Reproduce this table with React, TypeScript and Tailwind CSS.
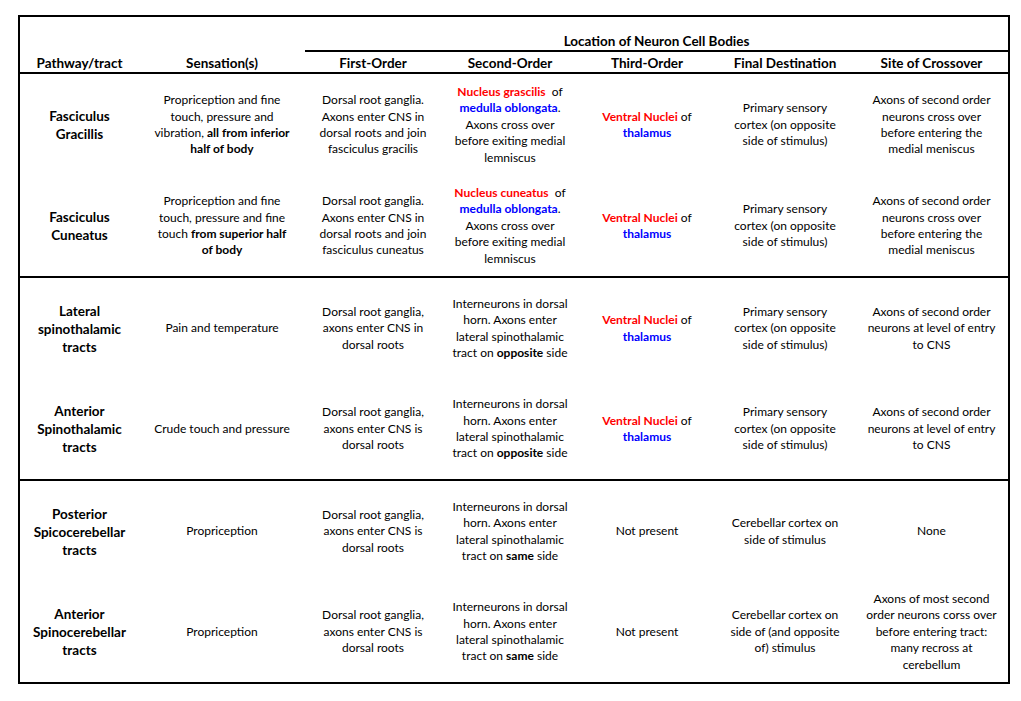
import React from "react";

const R = ({ children }: { children: React.ReactNode }) => (
  <span className="font-bold text-[#ff0000]">{children}</span>
);
const B = ({ children }: { children: React.ReactNode }) => (
  <span className="font-bold text-[#0000ff]">{children}</span>
);

const cols = "grid grid-cols-[119px_166px_136px_138px_136px_140px_153px]";

const Cell = ({ children, bold }: { children: React.ReactNode; bold?: boolean }) => (
  <div
    className={
      bold
        ? "flex items-center justify-center text-center whitespace-nowrap text-[13.5px] leading-[18px] font-bold"
        : "flex items-center justify-center text-center whitespace-nowrap text-[12px] leading-[16.4px]"
    }
  >
    <div>{children}</div>
  </div>
);

const thalamus = (
  <>
    <R>Ventral Nuclei</R> of
    <br />
    <B>thalamus</B>
  </>
);

const sensory = (
  <>
    Primary sensory
    <br />
    cortex (on opposite
    <br />
    side of stimulus)
  </>
);

const rows: React.ReactNode[][] = [
  [
    <>Fasciculus<br />Gracillis</>,
    <>
      Propriception and fine<br />touch, pressure and<br />vibration, <b>all from inferior<br />half of body</b>
    </>,
    <>Dorsal root ganglia.<br />Axons enter CNS in<br />dorsal roots and join<br />fasciculus gracilis</>,
    <>
      <R>Nucleus grascilis</R>&nbsp; of<br /><B>medulla oblongata</B>.<br />Axons cross over<br />before exiting medial<br />lemniscus
    </>,
    thalamus,
    sensory,
    <>Axons of second order<br />neurons cross over<br />before entering the<br />medial meniscus</>,
  ],
  [
    <>Fasciculus<br />Cuneatus</>,
    <>
      Propriception and fine<br />touch, pressure and fine<br />touch <b>from superior half<br />of body</b>
    </>,
    <>Dorsal root ganglia.<br />Axons enter CNS in<br />dorsal roots and join<br />fasciculus cuneatus</>,
    <>
      <R>Nucleus cuneatus</R>&nbsp; of<br /><B>medulla oblongata</B>.<br />Axons cross over<br />before exiting medial<br />lemniscus
    </>,
    thalamus,
    sensory,
    <>Axons of second order<br />neurons cross over<br />before entering the<br />medial meniscus</>,
  ],
  [
    <>Lateral<br />spinothalamic<br />tracts</>,
    <>Pain and temperature</>,
    <>Dorsal root ganglia,<br />axons enter CNS in<br />dorsal roots</>,
    <>Interneurons in dorsal<br />horn. Axons enter<br />lateral spinothalamic<br />tract on <b>opposite</b> side</>,
    thalamus,
    sensory,
    <>Axons of second order<br />neurons at level of entry<br />to CNS</>,
  ],
  [
    <>Anterior<br />Spinothalamic<br />tracts</>,
    <>Crude touch and pressure</>,
    <>Dorsal root ganglia,<br />axons enter CNS is<br />dorsal roots</>,
    <>Interneurons in dorsal<br />horn. Axons enter<br />lateral spinothalamic<br />tract on <b>opposite</b> side</>,
    thalamus,
    sensory,
    <>Axons of second order<br />neurons at level of entry<br />to CNS</>,
  ],
  [
    <>Posterior<br />Spicocerebellar<br />tracts</>,
    <>Propriception</>,
    <>Dorsal root ganglia,<br />axons enter CNS is<br />dorsal roots</>,
    <>Interneurons in dorsal<br />horn. Axons enter<br />lateral spinothalamic<br />tract on <b>same</b> side</>,
    <>Not present</>,
    <>Cerebellar cortex on<br />side of stimulus</>,
    <>None</>,
  ],
  [
    <>Anterior<br />Spinocerebellar<br />tracts</>,
    <>Propriception</>,
    <>Dorsal root ganglia,<br />axons enter CNS is<br />dorsal roots</>,
    <>Interneurons in dorsal<br />horn. Axons enter<br />lateral spinothalamic<br />tract on <b>same</b> side</>,
    <>Not present</>,
    <>Cerebellar cortex on<br />side of (and opposite<br />of) stimulus</>,
    <>Axons of most second<br />order neurons corss over<br />before entering tract:<br />many recross at<br />cerebellum</>,
  ],
];

const Row = ({ cells, h }: { cells: React.ReactNode[]; h: string }) => (
  <div className={`${cols} ${h}`}>
    {cells.map((c, i) => (
      <Cell key={i} bold={i === 0}>
        {c}
      </Cell>
    ))}
  </div>
);

export default function App() {
  return (
    <div className="min-h-[701px] bg-white text-black pl-[18px] pt-[15px] font-['Lato',sans-serif]">
      <div className="w-[992px] h-[669px] border-2 border-black flex flex-col">
        {/* header */}
        <div className={`${cols} h-[35px]`}>
          <div className="col-span-2" />
          <div className="col-span-5 flex items-end justify-center border-b-2 border-black text-[13.5px] leading-[17px] font-bold">
            Location of Neuron Cell Bodies
          </div>
        </div>
        <div className={`${cols} h-[22px] border-b-2 border-black`}>
          {["Pathway/tract", "Sensation(s)", "First-Order", "Second-Order", "Third-Order", "Final Destination", "Site of Crossover"].map((t) => (
            <div key={t} className="flex items-end justify-center text-[13.5px] leading-[17px] font-bold whitespace-nowrap">
              {t}
            </div>
          ))}
        </div>

        <div className="h-[204px] border-b-2 border-black flex flex-col">
          <Row cells={rows[0]} h="h-[102px]" />
          <Row cells={rows[1]} h="flex-1" />
        </div>
        <div className="h-[203px] border-b-2 border-black flex flex-col">
          <Row cells={rows[2]} h="h-[101px]" />
          <Row cells={rows[3]} h="flex-1" />
        </div>
        <div className="flex-1 flex flex-col">
          <Row cells={rows[4]} h="h-[101px]" />
          <Row cells={rows[5]} h="flex-1" />
        </div>
      </div>
    </div>
  );
}
